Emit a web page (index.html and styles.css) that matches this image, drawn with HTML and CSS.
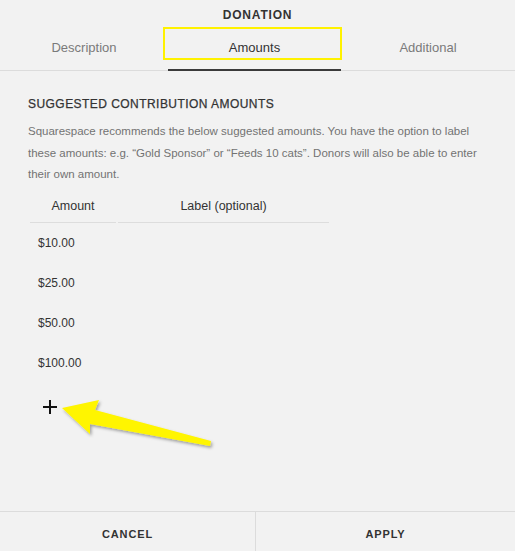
FILE: index.html
```html
<!DOCTYPE html>
<html>
<head>
<meta charset="utf-8">
<link rel="stylesheet" href="styles.css">
</head>
<body>
<div class="panel">
  <header class="head">
    <div class="title">DONATION</div>
    <nav class="tabs">
      <div class="tab">Description</div>
      <div class="tab active">Amounts<span class="highlight"></span></div>
      <div class="tab">Additional</div>
    </nav>
  </header>
  <main class="content">
    <h2 class="heading">SUGGESTED CONTRIBUTION AMOUNTS</h2>
    <p class="desc">Squarespace recommends the below suggested amounts. You have the option to label these amounts: e.g. “Gold Sponsor” or “Feeds 10 cats”. Donors will also be able to enter their own amount.</p>
    <div class="table">
      <div class="th th-amount">Amount</div>
      <div class="th th-label">Label (optional)</div>
      <div class="td">$10.00</div><div class="td"></div>
      <div class="td">$25.00</div><div class="td"></div>
      <div class="td">$50.00</div><div class="td"></div>
      <div class="td">$100.00</div><div class="td"></div>
    </div>
    <div class="add"><span class="plus-h"></span><span class="plus-v"></span></div>
  </main>
  <footer class="foot">
    <div class="btn">CANCEL</div>
    <div class="btn">APPLY</div>
  </footer>
  <svg class="arrow" viewBox="0 0 515 551" width="515" height="551" xmlns="http://www.w3.org/2000/svg">
    <defs>
      <filter id="sh" x="-20%" y="-50%" width="140%" height="200%">
        <feDropShadow dx="1.5" dy="2" stdDeviation="1.5" flood-color="#000" flood-opacity="0.35"/>
      </filter>
    </defs>
    <polygon filter="url(#sh)" fill="#fff500" points="62,408 99,400 95,410 211,441 210,446 90,424 90,434"/>
  </svg>
</div>
</body>
</html>
```
FILE: styles.css
```css
* { box-sizing: border-box; }
html, body { margin: 0; padding: 0; }
body {
  background: #f2f2f2;
  font-family: "Liberation Sans", Arial, sans-serif;
  color: #333;
}
.panel {
  position: relative;
  width: 515px;
  height: 551px;
  display: flex;
  flex-direction: column;
  overflow: hidden;
}
.title {
  padding-top: 9px;
  font-size: 12px;
  line-height: 13px;
  font-weight: bold;
  letter-spacing: 0.8px;
  text-align: center;
  color: #333;
}
.tabs {
  display: grid;
  grid-template-columns: 168px 173px 1fr;
  border-bottom: 1px solid #dcdcdc;
}
.tab {
  position: relative;
  text-align: center;
  font-size: 13px;
  line-height: 17px;
  padding: 17px 0 13px;
  color: #7a7a7a;
  border-bottom: 2px solid transparent;
  margin-bottom: -1px;
}
.tab.active {
  color: #333;
  border-bottom-color: #3a3a3a;
}
.highlight {
  position: absolute;
  left: -5px;
  right: -1px;
  top: 5px;
  bottom: 9px;
  border: 2px solid #fff200;
}
.content {
  padding-left: 28px;
  padding-right: 28px;
}
.heading {
  margin: 26px 0 0;
  font-size: 12px;
  line-height: 14px;
  font-weight: normal;
  letter-spacing: 0.45px;
  color: #333;
  -webkit-text-stroke: 0.25px #333;
}
.desc {
  margin: 10px 0 0;
  font-size: 11.5px;
  line-height: 21.5px;
  color: #737373;
}
.table {
  margin: 12px 0 0 2px;
  display: grid;
  grid-template-columns: 86px 211px;
  column-gap: 2px;
  width: 299px;
}
.th {
  text-align: center;
  font-size: 12.5px;
  line-height: 16px;
  padding-bottom: 8px;
  border-bottom: 1px solid #dddddd;
  color: #333;
}
.td {
  height: 40px;
  line-height: 40px;
  font-size: 12px;
  padding-left: 8px;
  color: #333;
}
.add {
  position: relative;
  width: 14px;
  height: 14px;
  margin: 17px 0 0 15px;
}
.plus-h, .plus-v {
  position: absolute;
  background: #111;
}
.plus-h { left: 0; right: 0; top: 6px; height: 2px; }
.plus-v { top: 0; bottom: 0; left: 6px; width: 2px; }
.foot {
  margin-top: auto;
  display: grid;
  grid-template-columns: 255px 1fr;
  border-top: 1px solid #dcdcdc;
  height: 40px;
}
.btn {
  text-align: center;
  font-size: 11px;
  font-weight: bold;
  letter-spacing: 0.9px;
  line-height: 44px;
  color: #333;
}
.btn + .btn { border-left: 1px solid #dcdcdc; }
.arrow {
  position: absolute;
  left: 0;
  top: 0;
  pointer-events: none;
}
```
